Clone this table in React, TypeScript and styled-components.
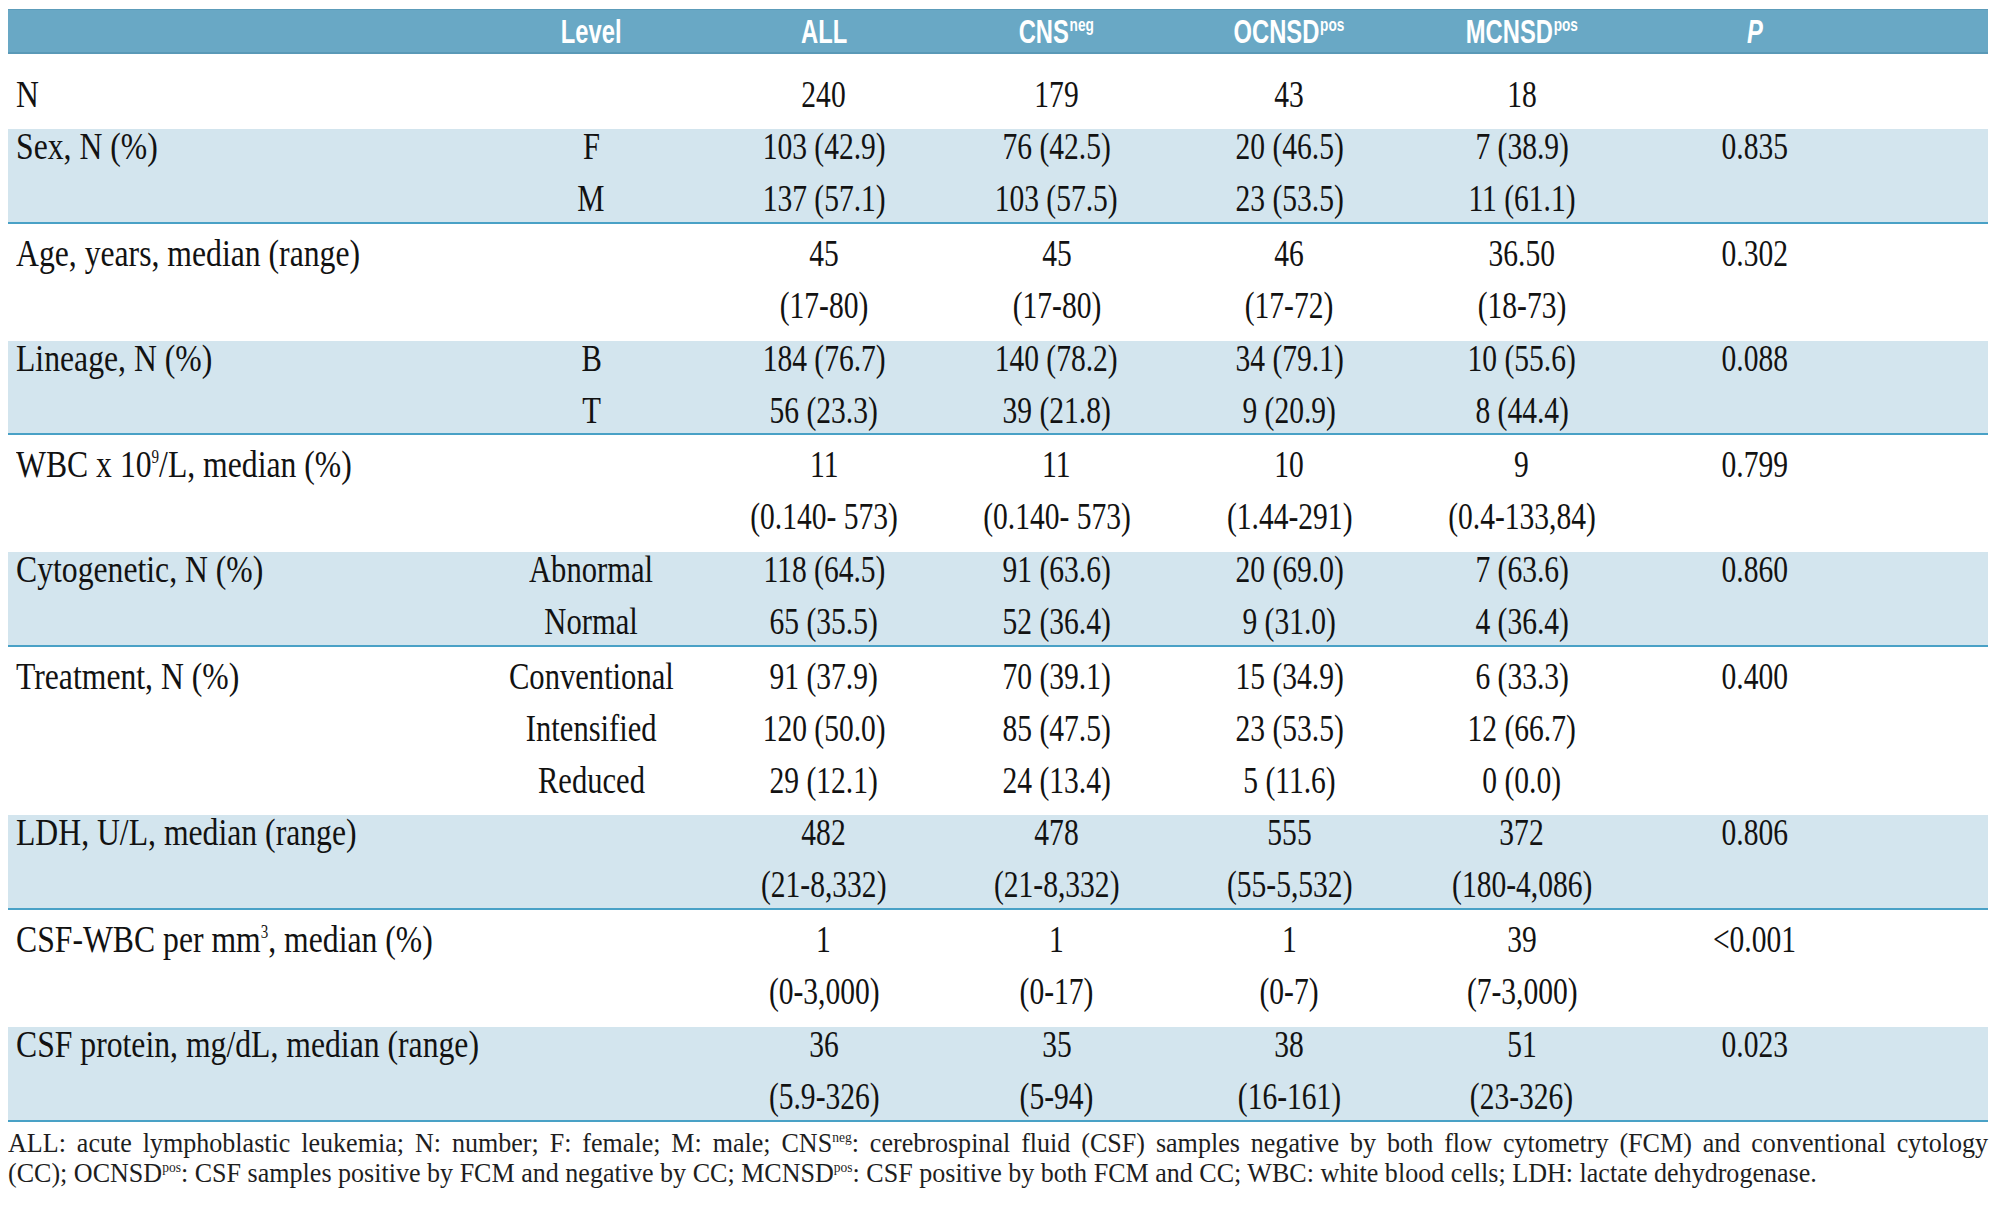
import React from 'react';
import styled, { createGlobalStyle } from 'styled-components';

const GlobalStyle = createGlobalStyle`
  html, body { margin: 0; padding: 0; background: #ffffff; overflow: hidden; }
  body { font-family: "Liberation Serif", "Times New Roman", serif; color: #121212; }
`;

const COLS = '467px repeat(6, 232.67px) 1fr';
const FOOT_SCALE = 0.965;

const Page = styled.div`
  width: 1980px;
  padding: 9px 12px 0 8px;
`;

const HeaderRow = styled.div`
  display: grid;
  grid-template-columns: ${COLS};
  align-items: center;
  height: 45px;
  box-sizing: border-box;
  background: #69a8c5;
  border-top: 1px solid #5c9cba;
  border-bottom: 2px solid #5a99b7;
`;

const HeadCell = styled.div`
  text-align: center;
  font-family: "Liberation Sans", Arial, sans-serif;
  font-weight: 700;
  font-size: 33px;
  line-height: 1;
  color: #ffffff;
  white-space: nowrap;
`;

const HeadText = styled.span<{ $italic?: boolean }>`
  display: inline-block;
  transform: scaleX(0.72);
  transform-origin: center;
  font-style: ${(p) => (p.$italic ? 'italic' : 'normal')};
`;

const HeadSup = styled.sup`
  font-size: 19px;
  line-height: 0;
  vertical-align: 12px;
  margin-left: 1px;
`;

const Row = styled.div<{ $band?: boolean; $h: number; $pt?: number; $pb?: number }>`
  display: grid;
  grid-template-columns: ${COLS};
  align-content: center;
  box-sizing: border-box;
  height: ${(p) => p.$h}px;
  padding-top: ${(p) => p.$pt ?? 0}px;
  padding-bottom: ${(p) => p.$pb ?? 7}px;
  background: ${(p) => (p.$band ? '#d3e5ee' : '#ffffff')};
  border-bottom: ${(p) => (p.$band ? '2px solid #49a1c6' : '0')};
`;

type Kind = 'label' | 'level' | 'data';

const Cell = styled.div<{ $kind: Kind }>`
  display: flex;
  flex-direction: column;
  align-items: ${(p) => (p.$kind === 'label' ? 'flex-start' : 'center')};
  padding-left: ${(p) => (p.$kind === 'label' ? '8px' : '0')};
  font-size: 38px;
  line-height: 52px;
  white-space: nowrap;
`;

const Line = styled.span<{ $kind: Kind }>`
  display: block;
  transform: scaleX(${(p) => (p.$kind === 'label' ? 0.834 : p.$kind === 'level' ? 0.805 : 0.777)});
  transform-origin: ${(p) => (p.$kind === 'label' ? 'left center' : 'center')};
`;

const Sup = styled.sup`
  font-size: 18px;
  line-height: 0;
  vertical-align: 14px;
`;

const Footnote = styled.div`
  margin-top: 6px;
  font-size: 27px;
  line-height: 30px;
  color: #1e1e1e;
`;

const FootLine = styled.div<{ $justify?: boolean }>`
  width: ${1980 / FOOT_SCALE}px;
  transform: scaleX(${FOOT_SCALE});
  transform-origin: left center;
  text-align: ${(p) => (p.$justify ? 'justify' : 'left')};
  text-align-last: ${(p) => (p.$justify ? 'justify' : 'left')};
`;

const FootSup = styled.sup`
  font-size: 14px;
  line-height: 0;
  vertical-align: 10px;
`;

type RowData = {
  label: React.ReactNode;
  level?: string[];
  cols: string[][];
  p?: string;
  band?: boolean;
  h: number;
  pt?: number;
  pb?: number;
};

const rows: RowData[] = [
  { label: 'N', cols: [['240'], ['179'], ['43'], ['18']], h: 75, pt: 5, pb: 0 },
  {
    label: 'Sex, N (%)', level: ['F', 'M'], band: true, h: 95, p: '0.835',
    cols: [['103 (42.9)', '137 (57.1)'], ['76 (42.5)', '103 (57.5)'], ['20 (46.5)', '23 (53.5)'], ['7 (38.9)', '11 (61.1)']],
  },
  {
    label: 'Age, years, median (range)', h: 117, p: '0.302',
    cols: [['45', '(17-80)'], ['45', '(17-80)'], ['46', '(17-72)'], ['36.50', '(18-73)']],
  },
  {
    label: 'Lineage, N (%)', level: ['B', 'T'], band: true, h: 94, p: '0.088',
    cols: [['184 (76.7)', '56 (23.3)'], ['140 (78.2)', '39 (21.8)'], ['34 (79.1)', '9 (20.9)'], ['10 (55.6)', '8 (44.4)']],
  },
  {
    label: (<>WBC x 10<Sup>9</Sup>/L, median (%)</>), h: 117, p: '0.799',
    cols: [['11', '(0.140- 573)'], ['11', '(0.140- 573)'], ['10', '(1.44-291)'], ['9', '(0.4-133,84)']],
  },
  {
    label: 'Cytogenetic, N (%)', level: ['Abnormal', 'Normal'], band: true, h: 95, p: '0.860',
    cols: [['118 (64.5)', '65 (35.5)'], ['91 (63.6)', '52 (36.4)'], ['20 (69.0)', '9 (31.0)'], ['7 (63.6)', '4 (36.4)']],
  },
  {
    label: 'Treatment, N (%)', level: ['Conventional', 'Intensified', 'Reduced'], h: 168, p: '0.400',
    cols: [
      ['91 (37.9)', '120 (50.0)', '29 (12.1)'],
      ['70 (39.1)', '85 (47.5)', '24 (13.4)'],
      ['15 (34.9)', '23 (53.5)', '5 (11.6)'],
      ['6 (33.3)', '12 (66.7)', '0 (0.0)'],
    ],
  },
  {
    label: 'LDH, U/L, median (range)', band: true, h: 95, p: '0.806',
    cols: [['482', '(21-8,332)'], ['478', '(21-8,332)'], ['555', '(55-5,532)'], ['372', '(180-4,086)']],
  },
  {
    label: (<>CSF-WBC per mm<Sup>3</Sup>, median (%)</>), h: 117, p: '<0.001',
    cols: [['1', '(0-3,000)'], ['1', '(0-17)'], ['1', '(0-7)'], ['39', '(7-3,000)']],
  },
  {
    label: 'CSF protein, mg/dL, median (range)', band: true, h: 95, p: '0.023',
    cols: [['36', '(5.9-326)'], ['35', '(5-94)'], ['38', '(16-161)'], ['51', '(23-326)']],
  },
];

const Lines: React.FC<{ kind: Kind; items: React.ReactNode[] }> = ({ kind, items }) => (
  <Cell $kind={kind}>
    {items.map((t, i) => (
      <Line key={i} $kind={kind}>{t}</Line>
    ))}
  </Cell>
);

export default function App() {
  return (
    <>
      <GlobalStyle />
      <Page>
        <HeaderRow>
          <HeadCell />
          <HeadCell><HeadText>Level</HeadText></HeadCell>
          <HeadCell><HeadText>ALL</HeadText></HeadCell>
          <HeadCell><HeadText>CNS<HeadSup>neg</HeadSup></HeadText></HeadCell>
          <HeadCell><HeadText>OCNSD<HeadSup>pos</HeadSup></HeadText></HeadCell>
          <HeadCell><HeadText>MCNSD<HeadSup>pos</HeadSup></HeadText></HeadCell>
          <HeadCell><HeadText $italic>P</HeadText></HeadCell>
          <HeadCell />
        </HeaderRow>
        {rows.map((r, i) => (
          <Row key={i} $band={r.band} $h={r.h} $pt={r.pt} $pb={r.pb}>
            <Lines kind="label" items={[r.label]} />
            <Lines kind="level" items={r.level ?? []} />
            {r.cols.map((c, j) => (
              <Lines key={j} kind="data" items={c} />
            ))}
            <Lines kind="data" items={r.p ? [r.p] : []} />
            <div />
          </Row>
        ))}
        <Footnote>
          <FootLine $justify>
            ALL: acute lymphoblastic leukemia; N: number; F: female; M: male; CNS<FootSup>neg</FootSup>: cerebrospinal fluid (CSF) samples negative by both flow cytometry (FCM) and conventional cytology
          </FootLine>
          <FootLine>
            (CC); OCNSD<FootSup>pos</FootSup>: CSF samples positive by FCM and negative by CC; MCNSD<FootSup>pos</FootSup>: CSF positive by both FCM and CC; WBC: white blood cells; LDH: lactate dehydrogenase.
          </FootLine>
        </Footnote>
      </Page>
    </>
  );
}
